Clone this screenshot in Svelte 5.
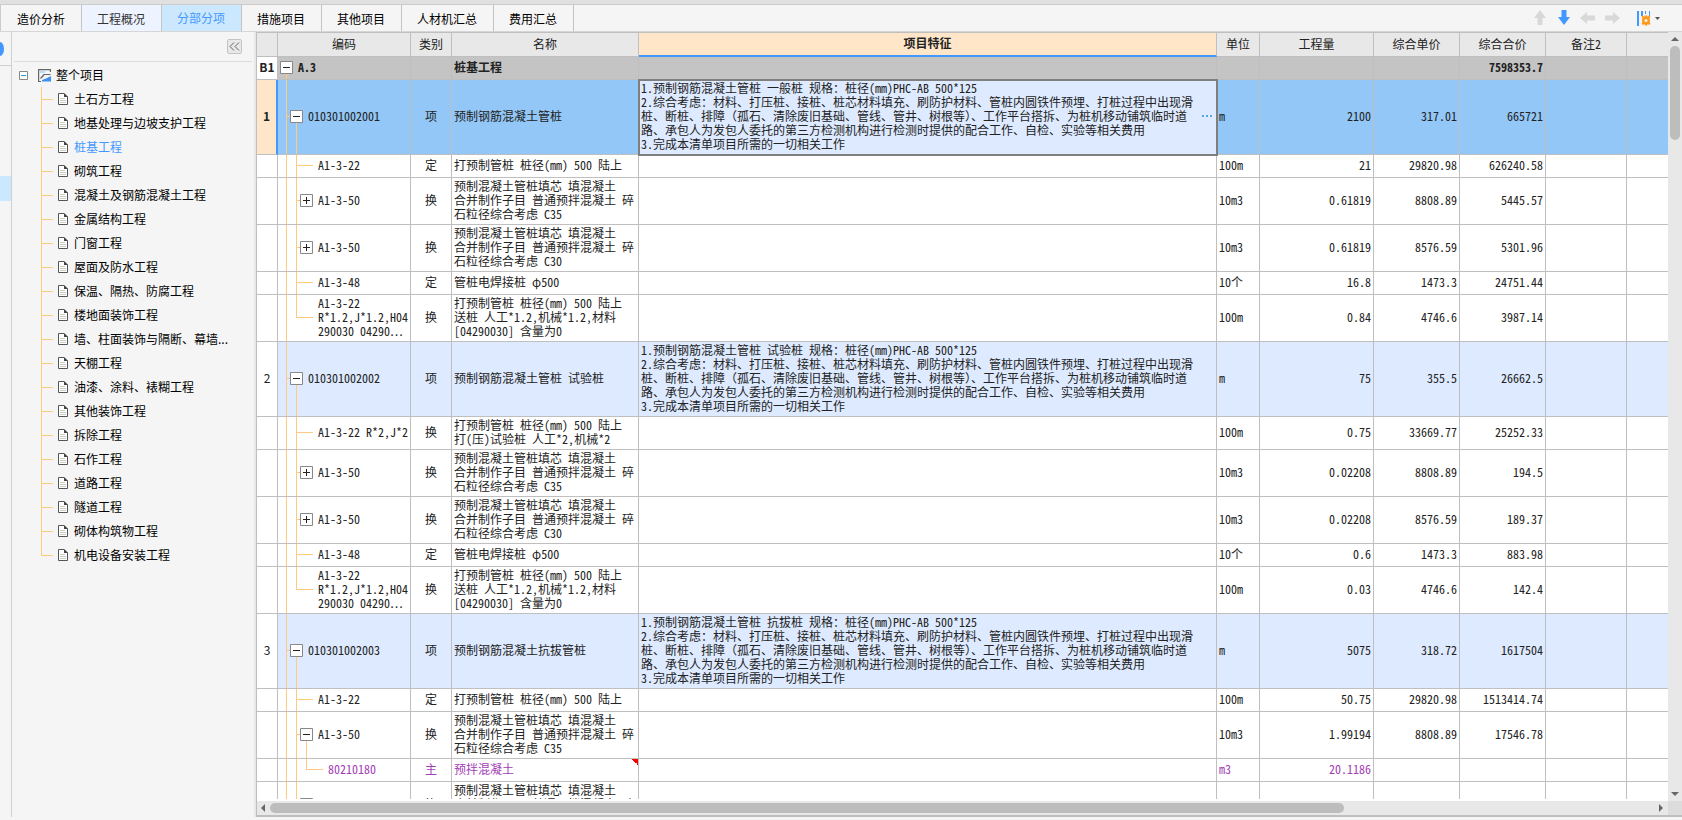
<script>
const tabs = ['造价分析', '工程概况', '分部分项', '措施项目', '其他项目', '人材机汇总', '费用汇总'];

const sections = [
  '土石方工程', '地基处理与边坡支护工程', '桩基工程', '砌筑工程', '混凝土及钢筋混凝土工程',
  '金属结构工程', '门窗工程', '屋面及防水工程', '保温、隔热、防腐工程', '楼地面装饰工程',
  '墙、柱面装饰与隔断、幕墙...', '天棚工程', '油漆、涂料、裱糊工程', '其他装饰工程', '拆除工程',
  '石作工程', '道路工程', '隧道工程', '砌体构筑物工程', '机电设备安装工程'
];

const headers = ['', '编码', '类别', '名称', '项目特征', '单位', '工程量', '综合单价', '综合合价', '备注2', ''];

const feature = (kind) => `1.预制钢筋混凝土管桩 ${kind} 规格：桩径(mm)PHC-AB 500*125
2.综合考虑：材料、打压桩、接桩、桩芯材料填充、刷防护材料、管桩内圆铁件预埋、打桩过程中出现滑桩、断桩、排障（孤石、清除废旧基础、管线、管井、树根等）、工作平台搭拆、为桩机移动铺筑临时道路、承包人为发包人委托的第三方检测机构进行检测时提供的配合工作、自检、实验等相关费用
3.完成本清单项目所需的一切相关工作`;

const drive = '打预制管桩 桩径(mm) 500 陆上';
const fill = '预制混凝土管桩填芯 填混凝土\n合并制作子目 普通预拌混凝土 碎\n石粒径综合考虑 ';
const send = drive + '\n送桩 人工*1.2,机械*1.2,材料\n[04290030] 含量为0';
const sendCode = 'A1-3-22\nR*1.2,J*1.2,H04\n290030 04290⋯';

// guide picks the tree lines behind the code, box is the expander sign
const rows = [
  { no: 'B1', type: 'group', guide: 'g0', box: '-', code: 'A.3', kind: '', name: '桩基工程', nums: ['', '', '7598353.7'] },
  { no: '1', type: 'item current', guide: 'g1', box: '-', code: '010301002001', kind: '项', name: '预制钢筋混凝土管桩', feature: feature('一般桩'), unit: 'm', nums: ['2100', '317.01', '665721'] },
  { guide: 'g2', code: 'A1-3-22', kind: '定', name: drive, unit: '100m', nums: ['21', '29820.98', '626240.58'] },
  { guide: 'g2', box: '+', code: 'A1-3-50', kind: '换', name: fill + 'C35', unit: '10m3', nums: ['0.61819', '8808.89', '5445.57'] },
  { guide: 'g2', box: '+', code: 'A1-3-50', kind: '换', name: fill + 'C30', unit: '10m3', nums: ['0.61819', '8576.59', '5301.96'] },
  { guide: 'g2', code: 'A1-3-48', kind: '定', name: '管桩电焊接桩 φ500', unit: '10个', nums: ['16.8', '1473.3', '24751.44'] },
  { guide: 'g2 last', code: sendCode, kind: '换', name: send, unit: '100m', nums: ['0.84', '4746.6', '3987.14'] },
  { no: '2', type: 'item', guide: 'g1', box: '-', code: '010301002002', kind: '项', name: '预制钢筋混凝土管桩 试验桩', feature: feature('试验桩'), unit: 'm', nums: ['75', '355.5', '26662.5'] },
  { guide: 'g2', code: 'A1-3-22 R*2,J*2', kind: '换', name: drive + '\n打(压)试验桩 人工*2,机械*2', unit: '100m', nums: ['0.75', '33669.77', '25252.33'] },
  { guide: 'g2', box: '+', code: 'A1-3-50', kind: '换', name: fill + 'C35', unit: '10m3', nums: ['0.02208', '8808.89', '194.5'] },
  { guide: 'g2', box: '+', code: 'A1-3-50', kind: '换', name: fill + 'C30', unit: '10m3', nums: ['0.02208', '8576.59', '189.37'] },
  { guide: 'g2', code: 'A1-3-48', kind: '定', name: '管桩电焊接桩 φ500', unit: '10个', nums: ['0.6', '1473.3', '883.98'] },
  { guide: 'g2 last', code: sendCode, kind: '换', name: send, unit: '100m', nums: ['0.03', '4746.6', '142.4'] },
  { no: '3', type: 'item', guide: 'g1', box: '-', code: '010301002003', kind: '项', name: '预制钢筋混凝土抗拔管桩', feature: feature('抗拔桩'), unit: 'm', nums: ['5075', '318.72', '1617504'] },
  { guide: 'g2', code: 'A1-3-22', kind: '定', name: drive, unit: '100m', nums: ['50.75', '29820.98', '1513414.74'] },
  { guide: 'g2 open', box: '-', code: 'A1-3-50', kind: '换', name: fill + 'C35', unit: '10m3', nums: ['1.99194', '8808.89', '17546.78'] },
  { type: 'material', guide: 'g3', code: '80210180', kind: '主', name: '预拌混凝土', unit: 'm3', nums: ['20.1186', '', ''] },
  { guide: 'g2', box: '-', code: 'A1-3-50', kind: '换', name: fill + 'C30', unit: '10m3', nums: ['1.99194', '8576.59', '17084.05'] }
];

let activeTab = $state('分部分项');
let activeSection = $state('桩基工程');

// latin runs are set half width, everything else keeps the full square
function runs(text) {
  return text.split(/([\x20-\x7e]+)/).filter((part) => part);
}

function isLatin(part) {
  return /^[\x20-\x7e]+$/.test(part);
}
</script>

{#snippet mixed(text)}
  {#each runs(text) as part}{#if isLatin(part)}<span class="half">{part}</span>{:else}{part}{/if}{/each}
{/snippet}

<div class="app">
  <header class="topbar">
    <nav class="tabs">
      {#each tabs as tab}
        <button class="tab" class:active={tab === activeTab} class:visited={tab === '工程概况'} onclick={() => (activeTab = tab)}>{tab}</button>
      {/each}
    </nav>
    <div class="tools">
      <button class="tool" aria-label="上移"><svg width="16" height="16" viewBox="0 0 16 16"><path d="M8 0l6 8h-3.500v7h-5V8H2z" fill="#d8d8d8" /></svg></button>
      <button class="tool" aria-label="下移"><svg width="16" height="16" viewBox="0 0 16 16"><path d="M8 15l6-8h-3.500V0h-5v7H2z" fill="#4398ff" /></svg></button>
      <button class="tool" aria-label="左移"><svg width="16" height="16" viewBox="0 0 16 16"><path d="M0 8l7-6v3.500h8v5H7V14z" fill="#d8d8d8" /></svg></button>
      <button class="tool" aria-label="右移"><svg width="16" height="16" viewBox="0 0 16 16"><path d="M16 8L9 2v3.500H1v5h8V14z" fill="#d8d8d8" /></svg></button>
      <button class="tool config" aria-label="列设置">
        <svg width="26" height="16" viewBox="0 0 26 16">
          <path d="M1 1h2v15H1zM5 1h2v5H5zM9 1h1v3H9zM13 1h1v5h-1z" fill="#4398ff" />
          <g fill="#ff9a1f">
            <circle cx="10" cy="10.500" r="4" />
            <path d="M8.700 5.500h2.600v10H8.700zM5.500 7l1.300-1.700 7.700 8.300-1.300 1.700zM14.500 7l-1.300-1.700-7.700 8.300 1.300 1.700z" />
          </g>
          <circle cx="10" cy="10.500" r="1.500" fill="#f5f5f5" />
          <path d="M19 7h5l-2.500 3z" fill="#555" />
        </svg>
      </button>
    </div>
  </header>

  <div class="body">
    <div class="rail">
      <div class="rail-head"><span class="dot"></span></div>
      <div class="rail-mark"></div>
    </div>

    <aside class="side">
      <div class="side-head">
        <button class="fold" aria-label="收起">
          <svg width="15" height="15" viewBox="0 0 15 15" fill="none" stroke="#666"><path d="M7 3.500l-4 4 4 4M12 3.500l-4 4 4 4" /></svg>
        </button>
      </div>
      <div class="root">
        <svg width="9" height="9" viewBox="0 0 9 9" fill="none"><path d="M.5.5h8v8h-8z" stroke="#888" fill="#fff" /><path d="M2 4.500h5" stroke="#2f9be0" /></svg>
        <svg class="project" width="14" height="13" viewBox="0 0 14 13">
          <path d="M3 12.500H.6V.6h11.800V3" fill="none" stroke="#666" stroke-width="1.200" />
          <path d="M2 2h5v2H2z" fill="#bcdcff" />
          <path d="M2.500 9.500L6 5.500h6.500M4 8l2-2.200" fill="none" stroke="#666" stroke-width="1.200" />
          <path d="M4 12.500V11l4-1.500 5-2.500v5.500z" fill="#3d8ff0" />
        </svg>
        <span>整个项目</span>
      </div>
      <ul class="tree">
        {#each sections as section}
          <li>
            <button class:active={section === activeSection} onclick={() => (activeSection = section)}>
              <svg width="10" height="12" viewBox="0 0 10 12" fill="none">
                <path d="M.5.5h5.500l3.500 3.500v7.500h-9z" fill="#fff" stroke="#555" />
                <path d="M6 0l4 4H6z" fill="#444" />
                <path d="M2 5.500h5M2 7.500h6M2 9.500h6" stroke="#ccc" />
              </svg>
              {section}
            </button>
          </li>
        {/each}
      </ul>
    </aside>

    <main class="grid">
      <div class="pane">
        <div class="viewport">
          <table>
            <colgroup>
              <col class="c-no" /><col class="c-code" /><col class="c-kind" /><col class="c-name" /><col />
              <col class="c-unit" /><col class="c-qty" /><col class="c-price" /><col class="c-price" /><col class="c-note" /><col class="c-rest" />
            </colgroup>
            <thead>
              <tr>
                {#each headers as title}
                  <th class:picked={title === '项目特征'}>{@render mixed(title)}</th>
                {/each}
              </tr>
            </thead>
            <tbody>
              {#each rows as row}
                <tr class={row.type}>
                  <td class="no">{row.no ?? ''}</td>
                  <td class="code {row.guide}">
                    <div class="node">
                      {#if row.box}
                        <button class="box" aria-label={row.box === '-' ? '折叠' : '展开'}>
                          <svg width="13" height="13" viewBox="0 0 13 13" fill="none">
                            <path d="M.5.5h12v12H.5z" stroke="#888" fill="#fff" />
                            <path d={row.box === '-' ? 'M3 6.500h7' : 'M3 6.500h7M6.500 3v7'} stroke="#222" />
                          </svg>
                        </button>
                      {/if}
                      <span class="label">{@render mixed(row.code)}</span>
                    </div>
                  </td>
                  <td class="kind">{row.kind}</td>
                  <td class="name" class:flagged={row.type === 'material'}>{@render mixed(row.name)}</td>
                  <td class="feature">
                    {#if row.feature}
                      <div class="detail">
                        <div class="text">{@render mixed(row.feature)}</div>
                        {#if row.no === '1'}
                          <button class="more" aria-label="编辑项目特征">
                            <svg width="10" height="2" viewBox="0 0 10 2"><path d="M0 0h2v2H0zM4 0h2v2H4zM8 0h2v2H8z" fill="#5aa5dc" /></svg>
                          </button>
                        {/if}
                      </div>
                    {/if}
                  </td>
                  <td class="unit">{@render mixed(row.unit ?? '')}</td>
                  {#each row.nums as num}
                    <td class="num half">{num}</td>
                  {/each}
                  <td></td>
                  <td></td>
                </tr>
              {/each}
            </tbody>
          </table>
        </div>
        <div class="vbar">
          <svg width="8" height="4" viewBox="0 0 8 4"><path d="M4 0l4 4H0z" fill="#666" /></svg>
          <div class="track"><div class="thumb"></div></div>
          <svg width="8" height="4" viewBox="0 0 8 4"><path d="M4 4l4-4H0z" fill="#666" /></svg>
        </div>
      </div>
      <div class="hbar">
        <svg width="4" height="8" viewBox="0 0 4 8"><path d="M0 4l4-4v8z" fill="#666" /></svg>
        <div class="track"><div class="thumb"></div></div>
        <svg width="4" height="8" viewBox="0 0 4 8"><path d="M4 4L0 0v8z" fill="#666" /></svg>
        <div class="corner"></div>
      </div>
    </main>
  </div>
</div>

<style>
:global(body) {
  margin: 0;
}

.app {
  --line: #bfbfbf;
  --guide: linear-gradient(#ffc980, #ffc980);
  display: flex;
  flex-direction: column;
  box-sizing: border-box;
  height: 100vh;
  padding-bottom: 3px;
  overflow: hidden;
  background: #f5f5f5;
  color: #000;
  font: 12px/14px "Noto Sans CJK SC", sans-serif;
}

button {
  padding: 0;
  border: 0;
  background: none;
  color: inherit;
  font: inherit;
  cursor: pointer;
}

svg {
  display: block;
  flex: none;
}

.half {
  font-feature-settings: "hwid";
}

/* tabs and toolbar */
.topbar {
  display: flex;
  justify-content: space-between;
  flex: none;
  border-top: 4px solid #e0e0e0;
  border-bottom: 1px solid #d6d6d6;
  box-shadow: inset 0 1px #ccc;
}

.tabs {
  display: flex;
  padding: 1px 0 0 1px;
  border-left: 1px solid #ccc;
}

.tab {
  height: 26px;
  padding: 2px 16px 0 15px;
  border-right: 1px solid #c4c4c4;
}

.tab.visited {
  background: #eef4ff;
  color: #333;
}

.tab.active {
  padding-top: 0;
  background: #cce8ff;
  color: #4398ff;
}

.tools {
  display: flex;
  align-items: center;
  padding-right: 20px;
}

.tool {
  display: flex;
  justify-content: center;
  width: 24px;
}

.tool.config {
  width: 26px;
  margin-left: 12px;
}

.body {
  display: flex;
  flex: 1;
  min-height: 0;
}

.rail {
  flex: none;
  width: 11px;
  border-right: 1px solid #d0d0d0;
}

.rail-head {
  display: flex;
  align-items: center;
  height: 33px;
  border-bottom: 1px solid #d0d0d0;
}

.dot {
  width: 4px;
  height: 14px;
  border-radius: 0 100% 100% 0 / 0 50% 50% 0;
  background: #4398ff;
}

.rail-mark {
  height: 25px;
  margin-top: 110px;
  background: #cce8ff;
}

/* section tree */
.side {
  flex: none;
  box-sizing: border-box;
  width: 244px;
  border-right: 2px solid #e8e8e8;
}

.side-head {
  display: flex;
  justify-content: flex-end;
  align-items: center;
  height: 29px;
  margin: 0 2px 1px;
  padding-right: 10px;
  border-bottom: 1px solid #dcdcdc;
}

.fold {
  border: 1px solid #c4c4c4;
  border-radius: 2px;
  background: #e8e8e8;
}

.fold svg {
  margin: -1px;
}

.root {
  display: flex;
  align-items: center;
  height: 24px;
  padding-left: 7px;
}

.project {
  margin: 0 4px 0 10px;
}

.tree {
  margin: 0 0 0 29px;
  padding: 0;
  list-style: none;
}

.tree li {
  height: 24px;
  padding-left: 17px;
  background-image: var(--guide), var(--guide);
  background-position: 0 0, 0 50%;
  background-size: 1px 100%, 12px 1px;
  background-repeat: no-repeat;
}

.tree li:last-child {
  background-size: 1px 50%, 12px 1px;
}

.tree button {
  display: flex;
  align-items: center;
  gap: 6px;
  height: 24px;
  white-space: nowrap;
}

.tree button.active {
  color: #4398ff;
}

/* bill grid */
.grid {
  display: flex;
  flex-direction: column;
  flex: 1;
  min-width: 0;
  border-left: 1px solid var(--line);
  border-bottom: 2px solid var(--line);
}

.pane {
  display: flex;
  flex: 1;
  min-height: 0;
}

.viewport {
  flex: 1;
  min-width: 0;
  overflow: hidden;
  border-top: 1px solid var(--line);
  border-bottom: 2px solid #fff;
  background: #fff;
}

table {
  width: 100%;
  table-layout: fixed;
  border-collapse: separate;
  border-spacing: 0;
  color: #222;
}

.c-no { width: 21px; }
.c-code { width: 133px; }
.c-kind { width: 41px; }
.c-name { width: 187px; }
.c-unit { width: 43px; }
.c-qty { width: 114px; }
.c-price { width: 86px; }
.c-note { width: 81px; }
.c-rest { width: 41px; }

th,
td {
  box-sizing: border-box;
  height: 23px;
  padding: 1px 2px 3px;
  border-right: 1px solid var(--line);
  border-bottom: 1px solid var(--line);
}

th {
  height: 24px;
  padding: 0 0 2px;
  background: #e8e8e8;
  font-weight: normal;
}

th.picked {
  border-bottom: 2px solid #4398ff;
  background: #ffe6c8;
  font-weight: bold;
}

th:last-child,
td:last-child {
  border-right: 0;
}

.no,
.kind {
  padding-right: 0;
  padding-left: 0;
  text-align: center;
}

.name,
.feature,
.node {
  white-space: pre-line;
}

.num {
  text-align: right;
}

.code {
  padding-right: 0;
  background-repeat: no-repeat;
}

.node {
  display: flex;
  align-items: center;
}

.box {
  margin-right: 5px;
}

.g0 {
  padding-left: 2px;
  background-image: var(--guide);
  background-position: 8px 100%;
  background-size: 1px 50%;
}

.g1 {
  padding-left: 12px;
  background-image: var(--guide), var(--guide), var(--guide);
  background-position: 8px 0, 8px 49%, 18px 100%;
  background-size: 1px 100%, 10px 1px, 1px 50%;
}

.g2 {
  padding-left: 22px;
  background-image: var(--guide), var(--guide), var(--guide);
  background-position: 8px 0, 18px 0, 18px 49%;
  background-size: 1px 100%, 1px 100%, 17px 1px;
}

.g2.last {
  background-size: 1px 100%, 1px 50%, 17px 1px;
}

.g2.open {
  background-image: var(--guide), var(--guide), var(--guide), var(--guide);
  background-position: 8px 0, 18px 0, 18px 49%, 28px 100%;
  background-size: 1px 100%, 1px 100%, 17px 1px, 1px 50%;
}

.g3 {
  padding-left: 50px;
  background-image: var(--guide), var(--guide), var(--guide), var(--guide);
  background-position: 8px 0, 18px 0, 28px 0, 28px 49%;
  background-size: 1px 100%, 1px 100%, 1px 50%, 17px 1px;
}

.g2 .label:first-child {
  padding-left: 18px;
}

.group td {
  background-color: #c4c4c4;
  font-weight: bold;
}

.item td {
  background-color: #ddeaff;
}

.group .no,
.item .no {
  background-color: #fff;
}

.current td {
  background-color: #92c7f7;
}

.current .no {
  border-right: 2px solid #4398ff;
  background-color: #ffe6c8;
  font-weight: bold;
}

.current .feature {
  outline: 2px solid #7f7f7f;
  outline-offset: -1px;
  background-color: #ddeaff;
}

.detail {
  display: flex;
  padding-right: 15px;
}

.current .detail {
  padding-right: 0;
}

.text {
  flex: 1;
}

.more {
  display: flex;
  justify-content: flex-end;
  align-items: center;
  width: 15px;
  padding-right: 2px;
}

.material td {
  color: #a33db5;
}

/* red comment mark in the corner of the cell */
.flagged {
  background: linear-gradient(45deg, transparent 50%, #f00 50%) 100% 0 / 6px 6px no-repeat;
}

/* scrollbars */
.vbar {
  display: flex;
  flex-direction: column;
  align-items: center;
  gap: 5px;
  flex: none;
  box-sizing: border-box;
  width: 14px;
  padding: 5px 0;
  background: #e8e8e8;
}

.track {
  flex: 1;
}

.thumb {
  border-radius: 5px;
  background: #bdbdbd;
}

.vbar .thumb {
  width: 10px;
  height: 94px;
}

.hbar {
  display: flex;
  align-items: center;
  gap: 5px;
  flex: none;
  height: 14px;
  padding-left: 4px;
  background: #e8e8e8;
}

.hbar .thumb {
  width: 77.6%;
  height: 10px;
}

.corner {
  width: 14px;
  height: 14px;
  background: #dcdcdc;
}
</style>
